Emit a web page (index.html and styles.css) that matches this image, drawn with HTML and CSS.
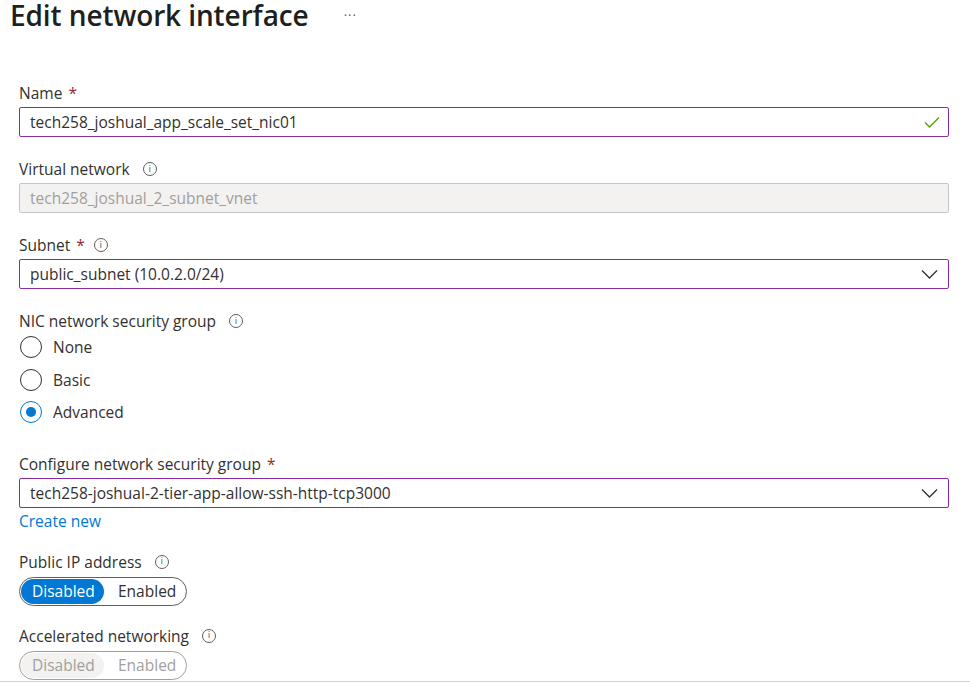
FILE: index.html
```html
<!DOCTYPE html>
<html lang="en">
<head>
<meta charset="utf-8">
<title>Edit network interface</title>
<link rel="stylesheet" href="styles.css">
</head>
<body>
<div class="page">
  <header class="header">
    <h1 class="title">Edit network interface</h1>
    <span class="more">···</span>
  </header>

  <form class="form">
    <div class="field">
      <div class="label">Name <span class="req">*</span></div>
      <div class="input dirty">
        <span class="value">tech258_joshual_app_scale_set_nic01</span>
        <svg class="check" width="16" height="12" viewBox="0 0 16 12"><path d="M1 6.5 L5.5 11 L15 1.5" fill="none" stroke="#57a300" stroke-width="1.4"/></svg>
      </div>
    </div>

    <div class="field">
      <div class="label">Virtual network <span class="info">i</span></div>
      <div class="input disabled">
        <span class="value">tech258_joshual_2_subnet_vnet</span>
      </div>
    </div>

    <div class="field">
      <div class="label">Subnet <span class="req">*</span> <span class="info">i</span></div>
      <div class="input dirty">
        <span class="value">public_subnet (10.0.2.0/24)</span>
        <svg class="chev" width="17" height="10" viewBox="0 0 17 10"><path d="M1 1.5 L8.5 9 L16 1.5" fill="none" stroke="#323130" stroke-width="1.3"/></svg>
      </div>
    </div>

    <div class="field radios-field">
      <div class="label">NIC network security group <span class="info">i</span></div>
      <div class="radios">
        <label class="radio"><span class="circle"></span>None</label>
        <label class="radio"><span class="circle"></span>Basic</label>
        <label class="radio"><span class="circle on"></span>Advanced</label>
      </div>
    </div>

    <div class="field nsg-field">
      <div class="label">Configure network security group <span class="req">*</span></div>
      <div class="input dirty">
        <span class="value">tech258-joshual-2-tier-app-allow-ssh-http-tcp3000</span>
        <svg class="chev" width="17" height="10" viewBox="0 0 17 10"><path d="M1 1.5 L8.5 9 L16 1.5" fill="none" stroke="#323130" stroke-width="1.3"/></svg>
      </div>
      <a class="link" href="#">Create new</a>
    </div>

    <div class="field toggle-field">
      <div class="label">Public IP address <span class="info">i</span></div>
      <div class="toggle">
        <span class="opt sel">Disabled</span>
        <span class="opt">Enabled</span>
      </div>
    </div>

    <div class="field toggle-field">
      <div class="label">Accelerated networking <span class="info">i</span></div>
      <div class="toggle off">
        <span class="opt sel">Disabled</span>
        <span class="opt">Enabled</span>
      </div>
    </div>
  </form>
</div>
</body>
</html>
```

FILE: styles.css
```css
* { box-sizing: border-box; }
html, body { margin: 0; padding: 0; background: #fff; }
body {
  font-family: "Open Sans", "Segoe UI", sans-serif;
  font-size: 15.5px;
  color: #323130;
  width: 970px;
  height: 691px;
  overflow: hidden;
}
.page {
  height: 682px;
  border-bottom: 1px solid #d2d0ce;
  padding: 0 21px 0 19px;
}
.header {
  display: flex;
  align-items: center;
  margin-left: -9px;
  height: 30px;
}
.title {
  margin: 0;
  font-size: 28px;
  font-weight: 600;
  color: #201f1e;
  line-height: 30px;
  letter-spacing: -0.1px;
}
.more {
  margin-left: 35px;
  font-size: 13px;
  color: #605e5c;
  letter-spacing: 1px;
}
.form {
  display: flex;
  flex-direction: column;
  padding-top: 52px;
}
.field {
  display: flex;
  flex-direction: column;
  margin-bottom: 21px;
}
.label {
  display: flex;
  align-items: center;
  height: 22px;
  margin-bottom: 3px;
  line-height: 22px;
  white-space: pre;
}
.req { color: #a4262c; margin-left: 2px; }
.info {
  display: inline-flex;
  align-items: center;
  justify-content: center;
  width: 14px;
  height: 14px;
  border: 1px solid #605e5c;
  border-radius: 50%;
  font-size: 9px;
  line-height: 1;
  color: #605e5c;
  margin-left: 9px;
  font-family: "DejaVu Sans", sans-serif;
}
.input {
  display: flex;
  align-items: center;
  height: 30px;
  border: 1px solid #8a8886;
  border-radius: 2px;
  padding: 0 10px 0 10px;
}
.input .value { flex: 1; }
.input.dirty { border-color: #8a2da5; }
.input.disabled {
  background: #f3f2f1;
  border-color: #c8c6c4;
  color: #a19f9d;
}
.check { margin-right: -2px; }

.radios-field { margin-bottom: 24px; }
.radios-field .label { margin-bottom: 0; }
.radios { display: flex; flex-direction: column; margin-top: -1px; }
.radio {
  display: flex;
  align-items: center;
  height: 32.5px;
}
.circle {
  width: 22px;
  height: 22px;
  border: 1px solid #323130;
  border-radius: 50%;
  margin: 0 11px 0 1px;
  position: relative;
}
.circle.on { border-color: #0078d4; }
.circle.on::after {
  content: "";
  position: absolute;
  left: 5px; top: 5px;
  width: 10px; height: 10px;
  border-radius: 50%;
  background: #0078d4;
}
.nsg-field { margin-bottom: 20px; }
.link {
  color: #0078d4;
  text-decoration: none;
  line-height: 20px;
  margin-top: 3px;
}
.toggle-field { margin-bottom: 19px; }
.toggle-field .label { margin-bottom: 4px; }
.toggle {
  display: flex;
  align-items: center;
  width: 168px;
  height: 29px;
  border: 1px solid #605e5c;
  border-radius: 15px;
  padding: 0 1px;
}
.opt {
  height: 25px;
  line-height: 25px;
  padding: 0 11px;
  border-radius: 13px;
  color: #323130;
}
.opt.sel {
  background: #0078d4;
  color: #fff;
  width: 83px;
  text-align: center;
  margin-right: 3px;
}
.toggle.off { border-color: #a19f9d; }
.toggle.off .opt { color: #a19f9d; }
.toggle.off .opt.sel { background: #f3f2f1; color: #a19f9d; }
```
